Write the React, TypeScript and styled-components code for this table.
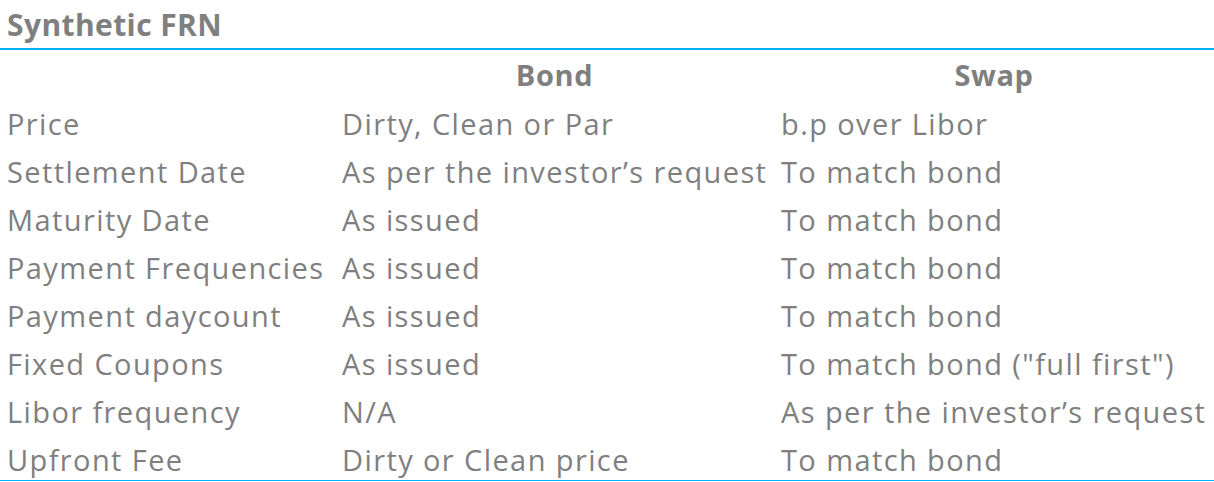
import React from "react";
import styled, { createGlobalStyle } from "styled-components";

const Global = createGlobalStyle`
  html, body { margin: 0; padding: 0; background: #ffffff; }
  body { font-family: "Open Sans", Lato, sans-serif; color: #7f7f7f; }
`;

const Page = styled.div`
  width: 1214px;
  height: 482px;
  overflow: hidden;
  background: #ffffff;
`;

const Title = styled.h1`
  margin: 0;
  height: 50px;
  box-sizing: border-box;
  border-bottom: 2px solid #00b0f0;
  padding: 6px 0 0 7px;
  font-size: 30px;
  font-weight: 700;
  line-height: 38px;
  letter-spacing: 0.4px;
  color: #7f7f7f;
`;

const Table = styled.div`
  display: grid;
  grid-template-columns: 335px 439px 1fr;
  grid-template-rows: 46px;
  grid-auto-rows: 48px;
  border-bottom: 1px solid #00b0f0;
`;

const Cell = styled.div<{ $head?: boolean; $center?: boolean }>`
  display: flex;
  align-items: center;
  justify-content: ${(p) => (p.$center ? "center" : "flex-start")};
  padding-left: ${(p) => (p.$center ? "0" : "7px")};
  padding-top: ${(p) => (p.$head ? "2px" : "6px")};
  font-size: 29px;
  font-weight: ${(p) => (p.$head ? 700 : 400)};
  letter-spacing: ${(p) => (p.$head ? "0.6px" : "1.4px")};
  white-space: nowrap;
  color: #7f7f7f;
`;

const rows: [string, string, string][] = [
  ["Price", "Dirty, Clean or Par", "b.p over Libor"],
  ["Settlement Date", "As per the investor\u2019s request", "To match bond"],
  ["Maturity Date", "As issued", "To match bond"],
  ["Payment Frequencies", "As issued", "To match bond"],
  ["Payment daycount", "As issued", "To match bond"],
  ["Fixed Coupons", "As issued", 'To match bond ("full first")'],
  ["Libor frequency", "N/A", "As per the investor\u2019s request"],
  ["Upfront Fee", "Dirty or Clean price", "To match bond"],
];

export default function App() {
  return (
    <Page>
      <Global />
      <Title>Synthetic FRN</Title>
      <Table>
        <Cell />
        <Cell $head $center>Bond</Cell>
        <Cell $head $center>Swap</Cell>
        {rows.map((r) => (
          <React.Fragment key={r[0]}>
            <Cell>{r[0]}</Cell>
            <Cell>{r[1]}</Cell>
            <Cell>{r[2]}</Cell>
          </React.Fragment>
        ))}
      </Table>
    </Page>
  );
}
